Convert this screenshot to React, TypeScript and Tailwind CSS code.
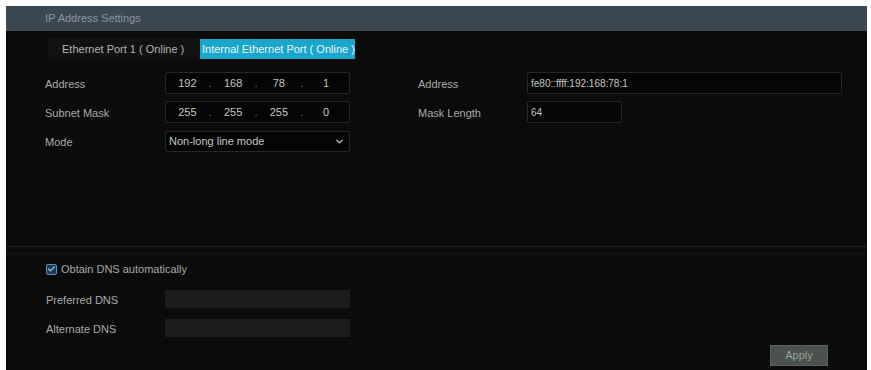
import { Check, ChevronDown } from 'lucide-react';

const font = { fontFamily: '"Liberation Sans", Arial, sans-serif' };

const IpBox = ({ parts }: { parts: string[] }) => (
  <div className="flex items-center h-[22px] w-[185px] bg-[#050505] border border-[#262626] rounded-[2px] text-[11px] text-[#c4c4c4]">
    {parts.map((p, i) => (
      <div key={i} className="flex items-center flex-1">
        <span className="flex-1 text-center">{p}</span>
        {i < parts.length - 1 && <span className="text-[#777]">.</span>}
      </div>
    ))}
  </div>
);

const Label = ({ children }: { children: string }) => (
  <span className="text-[11px] text-[#a9a9a9]">{children}</span>
);

export default function App() {
  return (
    <div className="bg-white w-[871px] h-[370px] pl-[6px] pr-[4px] pt-[6px]" style={font}>
      <div className="bg-[#0b0b0b] h-[364px] flex flex-col">
        <div className="h-[25px] bg-[#3b4751] flex items-center pl-[39px]">
          <span className="text-[11px] text-[#8b96a1]">IP Address Settings</span>
        </div>

        <div className="flex items-center pl-[42px] mt-[6px] h-[24px]">
          <div className="h-[22px] w-[152px] bg-[#111111] flex items-center pl-[14px] text-[11px] text-[#b4b4b4]">
            Ethernet Port 1 ( Online )
          </div>
          <div className="h-[20px] w-[155px] bg-[#1aa6cb] flex items-center pl-[2px] text-[11px] text-[#e8f6fb] whitespace-nowrap">
            Internal Ethernet Port ( Online )
          </div>
        </div>

        <div className="h-[186px] border-b border-[#1f1f1f] pt-[11px] flex">
          <div className="w-[373px] flex flex-col gap-[7px] pl-[39px]">
            <div className="flex items-center h-[22px]">
              <div className="w-[120px]"><Label>Address</Label></div>
              <IpBox parts={['192', '168', '78', '1']} />
            </div>
            <div className="flex items-center h-[22px]">
              <div className="w-[120px]"><Label>Subnet Mask</Label></div>
              <IpBox parts={['255', '255', '255', '0']} />
            </div>
            <div className="flex items-center h-[22px]">
              <div className="w-[120px]"><Label>Mode</Label></div>
              <div className="h-[21px] w-[185px] bg-[#050505] border border-[#262626] rounded-[2px] flex items-center justify-between pl-[3px] pr-[4px] text-[11px] text-[#c4c4c4]">
                <span>Non-long line mode</span>
                <ChevronDown size={11} strokeWidth={3} className="text-[#bbbbbb]" />
              </div>
            </div>
          </div>
          <div className="flex flex-col gap-[7px] pl-[39px]">
            <div className="flex items-center h-[22px]">
              <div className="w-[109px]"><Label>Address</Label></div>
              <div className="h-[22px] w-[315px] bg-[#050505] border border-[#262626] rounded-[2px] flex items-center pl-[3px] text-[10px] text-[#c4c4c4]">
                fe80::ffff:192:168:78:1
              </div>
            </div>
            <div className="flex items-center h-[22px]">
              <div className="w-[109px]"><Label>Mask Length</Label></div>
              <div className="h-[22px] w-[95px] bg-[#050505] border border-[#262626] rounded-[2px] flex items-center pl-[3px] text-[10px] text-[#c4c4c4]">
                64
              </div>
            </div>
          </div>
        </div>

        <div className="mt-[6px] border-t border-[#161616] flex-1 flex flex-col pl-[40px] pt-[8px]">
          <div className="flex items-center gap-[4px] h-[14px]">
            <div className="w-[11px] h-[11px] bg-[#1b3a55] border border-[#5a8fc0] rounded-[2px] flex items-center justify-center">
              <Check size={10} strokeWidth={3} className="text-[#9fc6ea]" />
            </div>
            <Label>Obtain DNS automatically</Label>
          </div>
          <div className="flex items-center h-[18px] mt-[14px]">
            <div className="w-[119px]"><Label>Preferred DNS</Label></div>
            <div className="h-[18px] w-[185px] bg-[#1c1c1c] rounded-[1px]" />
          </div>
          <div className="flex items-center h-[18px] mt-[11px]">
            <div className="w-[119px]"><Label>Alternate DNS</Label></div>
            <div className="h-[18px] w-[185px] bg-[#1c1c1c] rounded-[1px]" />
          </div>
          <div className="flex justify-end pr-[39px] mt-[8px]">
            <button className="h-[21px] w-[58px] bg-[#4a524e] border border-[#5a615e] text-[11px] text-[#9aa09d]">
              Apply
            </button>
          </div>
        </div>
      </div>
    </div>
  );
}
